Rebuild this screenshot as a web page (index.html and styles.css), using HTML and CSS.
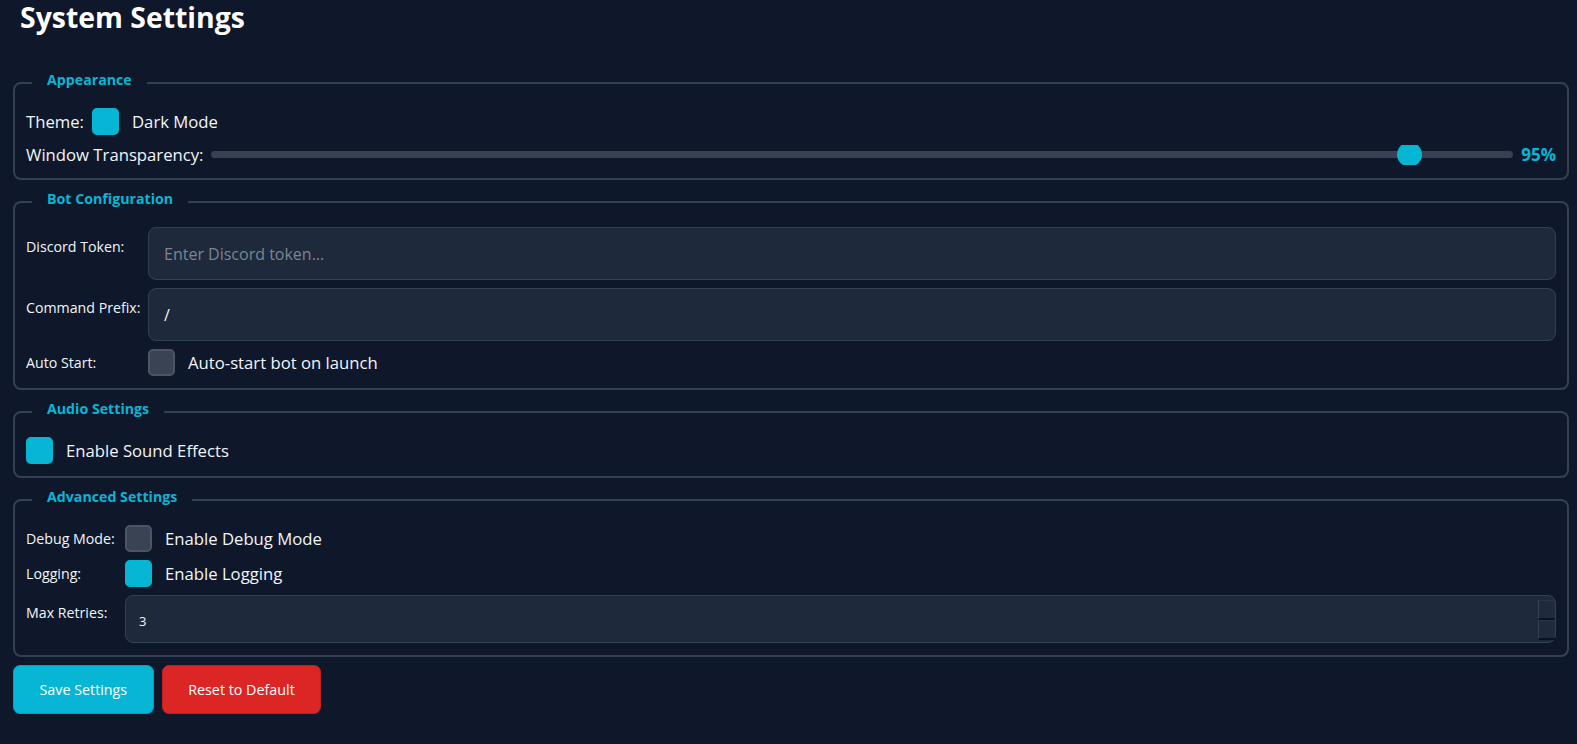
FILE: index.html
```html
<!DOCTYPE html>
<html lang="en">
<head>
<meta charset="utf-8">
<title>System Settings</title>
<link rel="stylesheet" href="styles.css">
</head>
<body>
<div class="page">
  <h1 class="title">System Settings</h1>

  <fieldset class="group">
    <legend class="group-title">Appearance</legend>
    <div class="stack">
      <div class="inline-row">
        <span class="text">Theme:</span>
        <label class="check-label">
          <span class="check on"></span>
          <span class="text">Dark Mode</span>
        </label>
      </div>
      <div class="slider-row">
        <span class="text">Window Transparency:</span>
        <div class="slider">
          <div class="slider-track"></div>
          <div class="slider-thumb" style="left: calc((100% - 25px) * 0.9286)"></div>
        </div>
        <span class="pct">95%</span>
      </div>
    </div>
  </fieldset>

  <fieldset class="group">
    <legend class="group-title">Bot Configuration</legend>
    <div class="form-grid form-grid-wide">
      <span class="field-label top">Discord Token:</span>
      <input class="field" type="text" placeholder="Enter Discord token...">
      <span class="field-label top">Command Prefix:</span>
      <input class="field" type="text" value="/">
      <span class="field-label">Auto Start:</span>
      <label class="check-label">
        <span class="check"></span>
        <span class="text">Auto-start bot on launch</span>
      </label>
    </div>
  </fieldset>

  <fieldset class="group">
    <legend class="group-title">Audio Settings</legend>
    <label class="check-label">
      <span class="check on"></span>
      <span class="text">Enable Sound Effects</span>
    </label>
  </fieldset>

  <fieldset class="group">
    <legend class="group-title">Advanced Settings</legend>
    <div class="form-grid form-grid-narrow">
      <span class="field-label">Debug Mode:</span>
      <label class="check-label">
        <span class="check"></span>
        <span class="text">Enable Debug Mode</span>
      </label>
      <span class="field-label">Logging:</span>
      <label class="check-label">
        <span class="check on"></span>
        <span class="text">Enable Logging</span>
      </label>
      <span class="field-label top-sm">Max Retries:</span>
      <div class="number-field">
        <span class="number-value">3</span>
        <span class="spinner">
          <span class="spin-btn"></span>
          <span class="spin-btn"></span>
        </span>
      </div>
    </div>
  </fieldset>

  <div class="actions">
    <button class="btn btn-save" type="button">Save Settings</button>
    <button class="btn btn-reset" type="button">Reset to Default</button>
  </div>
</div>
</body>
</html>
```

FILE: styles.css
```css
* {
  box-sizing: border-box;
}

html, body {
  margin: 0;
  padding: 0;
  background: #0f172a;
}

body {
  font-family: "Open Sans", "Noto Sans", "Liberation Sans", sans-serif;
  color: #f1f5f9;
  font-size: 16px;
}

.page {
  padding: 0 8px 20px 13px;
}

.title {
  margin: 0 0 38px 7px;
  font-size: 28.4px;
  line-height: 34px;
  font-weight: 700;
  color: #ffffff;
}

.group {
  margin: 0 0 11px 0;
  border: 2px solid #334155;
  border-radius: 8px;
  padding: 15px 11px 12px 11px;
  min-width: 0;
}

.group-title {
  margin-left: 6px;
  padding: 0 15px 5px 15px;
  font-size: 14.2px;
  line-height: 16px;
  font-weight: 700;
  color: #06b6d4;
}

.stack {
  display: flex;
  flex-direction: column;
  gap: 8px;
}

.text {
  font-size: 16.7px;
  line-height: 24px;
  color: #f1f5f9;
}

.inline-row {
  display: flex;
  align-items: center;
  gap: 8px;
}

.check-label {
  display: flex;
  align-items: center;
  gap: 13px;
}

.check {
  width: 27px;
  height: 27px;
  flex: none;
  border-radius: 5px;
  background: #3a4354;
  border: 2px solid #4b5563;
}

.check.on {
  background: #06b6d4;
  border-color: #06b6d4;
}

.slider-row {
  display: flex;
  align-items: center;
  gap: 8px;
  height: 23px;
}

.slider {
  position: relative;
  flex: 1;
  height: 20px;
  display: flex;
  align-items: center;
}

.slider-track {
  width: 100%;
  height: 7px;
  border-radius: 4px;
  background: #374151;
}

.slider-thumb {
  position: absolute;
  top: 0;
  width: 25px;
  height: 20px;
  background: #06b6d4;
  clip-path: circle(12.5px at 50% 50%);
}

.pct {
  font-size: 17px;
  font-weight: 700;
  color: #06b6d4;
  line-height: 23px;
}

.form-grid {
  display: grid;
  column-gap: 10px;
  row-gap: 8px;
  align-items: center;
}

.form-grid-wide {
  grid-template-columns: 112px 1fr;
}

.form-grid-narrow {
  grid-template-columns: 89px 1fr;
}

.field-label {
  font-size: 14.2px;
  line-height: 19px;
  color: #f1f5f9;
  white-space: nowrap;
}

.field-label.top {
  align-self: start;
  padding-top: 10px;
}

.field-label.top-sm {
  align-self: start;
  padding-top: 8px;
}

.field {
  display: block;
  width: 100%;
  height: 53px;
  padding: 0 15px;
  background: #1e293b;
  border: 1px solid #334155;
  border-radius: 8px;
  color: #f1f5f9;
  font-family: "Open Sans", "Noto Sans", "Liberation Sans", sans-serif;
  font-size: 16px;
  outline: none;
}

.field::placeholder {
  color: #7c8593;
}

.number-field {
  display: flex;
  align-items: center;
  justify-content: space-between;
  height: 48px;
  padding: 0 0 0 13px;
  background: #1e293b;
  border: 1px solid #334155;
  border-radius: 8px;
}

.number-value {
  font-size: 13px;
  color: #f1f5f9;
  padding-top: 3px;
}

.spinner {
  display: flex;
  flex-direction: column;
  gap: 0;
  align-self: stretch;
  padding: 4px 0 2px 0;
  width: 17px;
}

.spin-btn {
  flex: 1;
  background: #1f2a3c;
  border-left: 1px solid #334155;
  border-top: 1px solid #2b3648;
  border-bottom: 2px solid #0b1220;
}

.actions {
  display: flex;
  gap: 8px;
  margin-top: -3px;
}

.btn {
  height: 49px;
  padding: 0 25.5px;
  border: 1px solid transparent;
  border-radius: 7px;
  font-family: "Open Sans", "Noto Sans", "Liberation Sans", sans-serif;
  font-size: 14.3px;
  color: #ffffff;
  cursor: pointer;
}

.btn-save {
  background: #06b6d4;
  border-color: #0a9fb9;
}

.btn-reset {
  background: #dc2626;
  border-color: #c22020;
}
```
